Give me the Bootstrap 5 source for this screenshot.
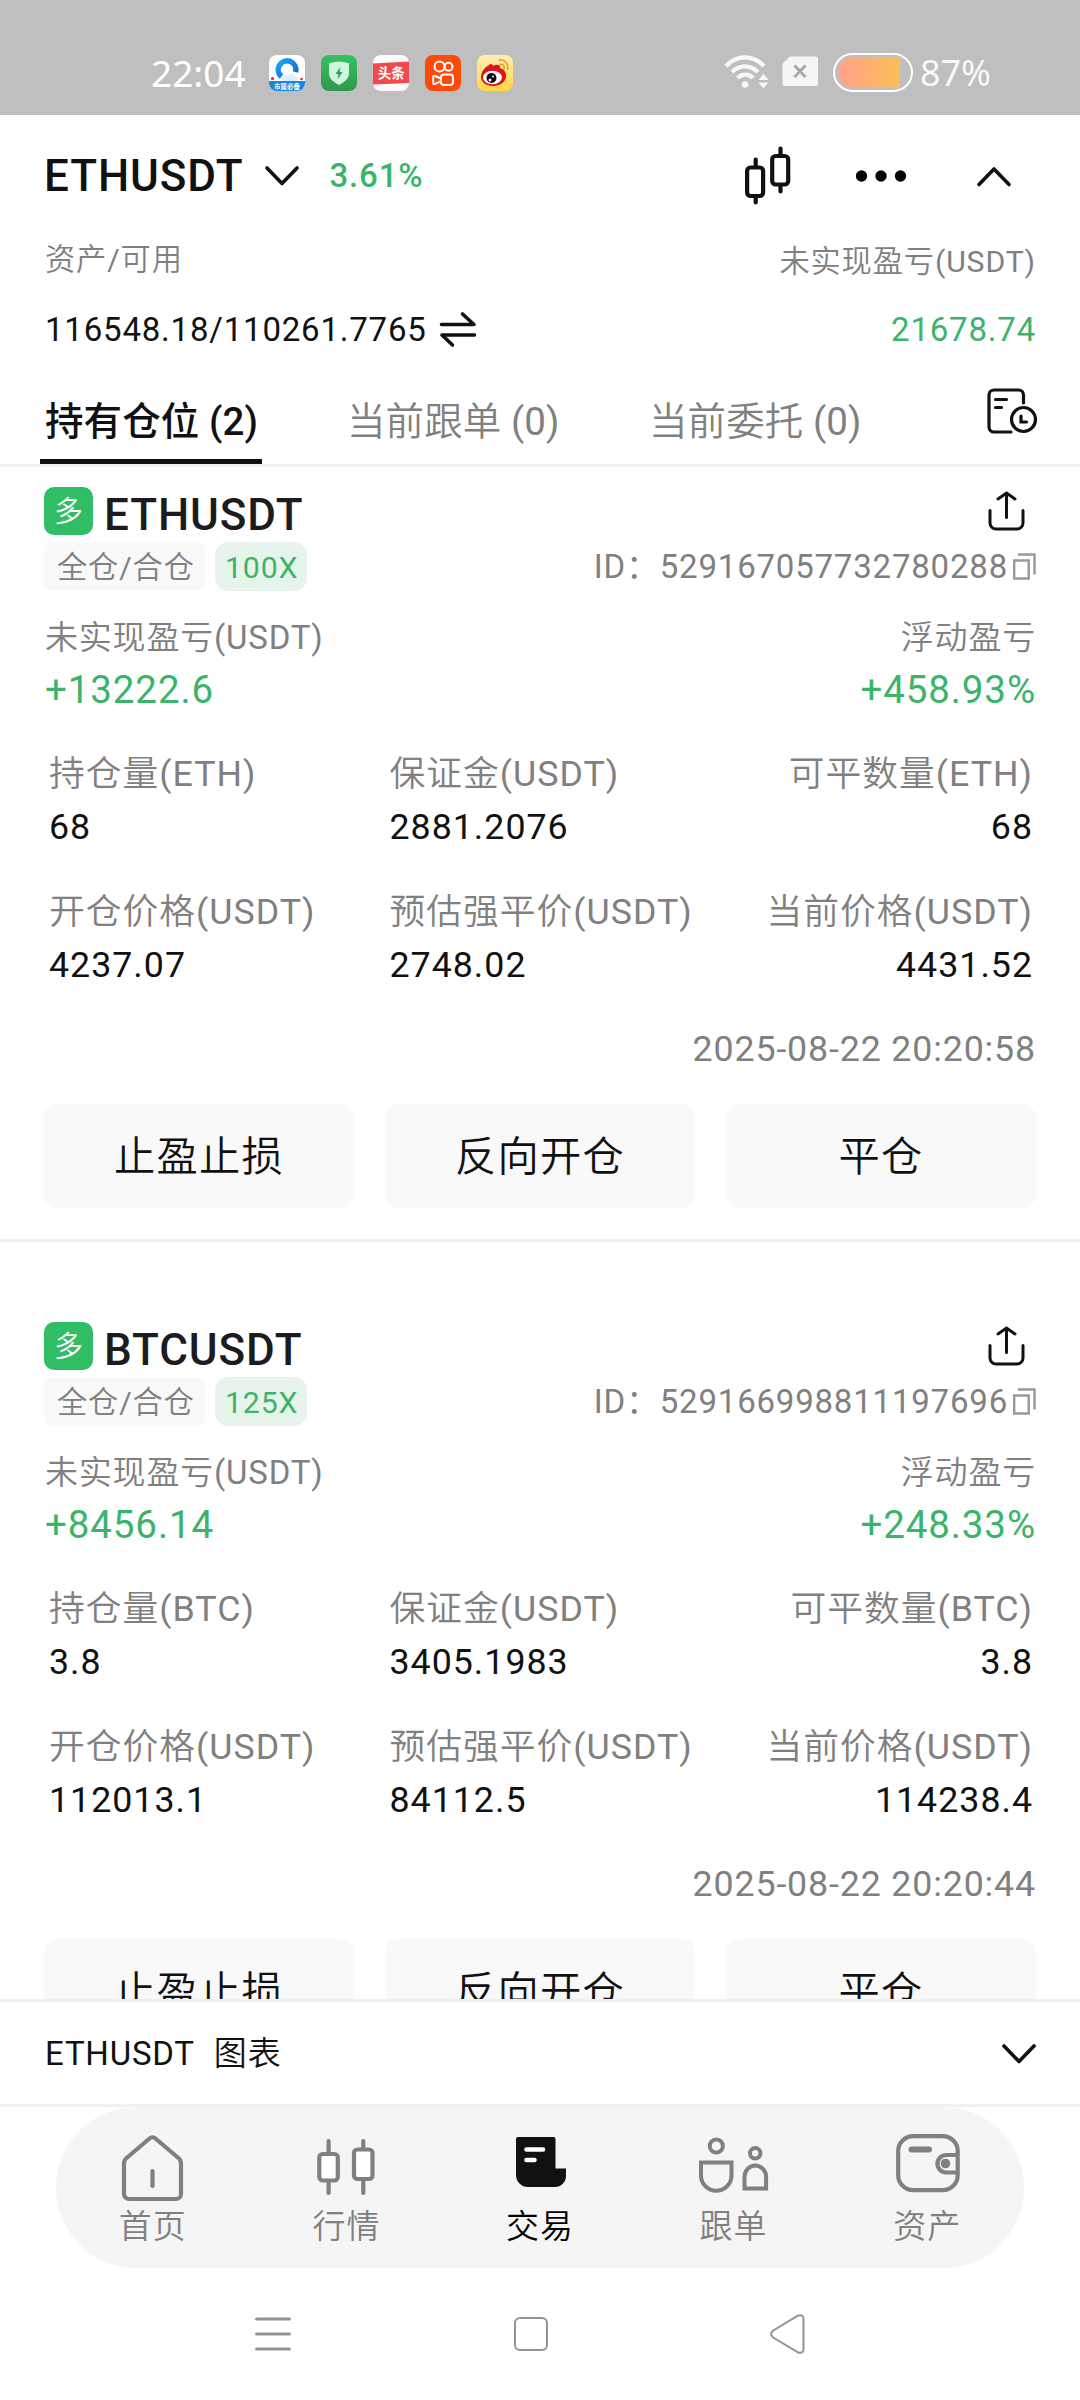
<!DOCTYPE html>
<html lang="zh-CN">
<head>
<meta charset="utf-8">
<meta name="viewport" content="width=device-width, initial-scale=1">
<title>ETHUSDT</title>
<link rel="stylesheet" href="https://cdn.jsdelivr.net/npm/bootstrap@5.3.0/dist/css/bootstrap.min.css">
<style>
  :root { --ink:#111112; --soft:#808080; --up:#3bb46a; --line:#f1f1f1; }
  html, body { height:2400px; overflow:hidden; }
  body { font-family:Roboto, "Noto Sans CJK SC DemiLight", "Noto Sans CJK SC", sans-serif; color:var(--ink); background:#fff; letter-spacing:.8px; font-size:33px; }
  svg { display:block; flex:none; overflow:visible; }
  .phone { width:1080px; height:2400px; }
  .soft { color:var(--soft); }
  .up { color:var(--up); }
  .fs11 { font-size:30.25px; letter-spacing:.85px; }
  .fs13 { font-size:35.75px; letter-spacing:1px; }
  .fs14 { font-size:38.5px; letter-spacing:.9px; }
  /* status bar */
  .statusbar { height:115px; background:#bfbfbf; color:#fff; padding:53px 89px 0 151px; font-family:"Noto Sans", sans-serif; font-size:37px; letter-spacing:0; line-height:40px; }
  .clock { width:118px; }
  .apps { gap:16px; }
  .battery { width:80px; height:39px; border:2.5px solid #fff; border-radius:20px; padding:2px 11px 2px 3px; }
  .battery-fill { border-radius:16px 0 0 16px; background:linear-gradient(90deg,#ffa18c,#fdbf55); }
  .pct { color:#f8f8f8; font-size:36px; padding-left:7px; }
  /* header */
  .topbar { height:121px; padding:0 69px 0 44px; }
  .pair { font-size:44px; font-weight:500; letter-spacing:.9px; line-height:48px; }
  .assets { height:141px; padding:0 44px 0 45px; }
  /* tabs */
  .tabs { height:90px; border-bottom:3px solid var(--line); padding:0 42px 0 40px; }
  .tabs .tab { height:87px; padding:7px 4px 0 5px; width:222px; margin-right:80px; border-bottom:5px solid transparent; font-size:38.5px; letter-spacing:.1px; line-height:76px; color:var(--soft); white-space:nowrap; }
  .tabs .tab.active { font-family:Roboto, "Noto Sans CJK SC", sans-serif; font-weight:500; color:var(--ink); border-color:var(--ink); }
  /* positions */
  .positions { height:1532px; overflow:hidden; }
  .position { padding:20px 44px 31px; border-bottom:3px solid var(--line); margin-bottom:60px; height:775px; }
  .side { width:49px; height:48px; border-radius:10px; background:#30bd66; color:#fff; font-size:29px; line-height:50px; letter-spacing:0; text-align:center; }
  .symbol { margin:8px 0 0 11px; color:#1c1c1e; }
  .tagrow { margin-top:7px; height:49px; }
  .tag { height:49px; line-height:51px; border-radius:9px; background:#f9f9f9; padding:0 13px; width:161px; white-space:nowrap; }
  .tag.lev { background:#e7f4ec; border-radius:13px; padding:0 10px; width:92px; margin-left:10px; }
  .pnl { margin-top:21px; padding-left:1px; line-height:52px; }
  .facts { margin:30px 3px 0 5px; line-height:54px; display:grid; grid-template-columns:340.5px 1fr auto; }
  .facts .soft { padding-top:1px; margin-bottom:-1px; }
  .time { margin-top:32px; line-height:50px; letter-spacing:.85px; }
  .acts { margin-top:30px; gap:31px; }
  .acts .btn { flex:1 1 0; height:104px; padding:0; border:0; border-radius:14px; background:#f9f9f9; font-size:41.25px; letter-spacing:1.2px; line-height:106px; color:var(--ink); }
  /* bottom */
  .chartbar { height:108px; border-top:3px solid var(--line); border-bottom:3px solid var(--line); padding:1px 44px 0 45px; }
  .dock { height:161px; margin:0 56px; border-radius:81px; background:#f5f5f5; }
  .dock .item { flex:1 1 0; color:var(--soft); }
  .dock .item.current { color:#000; }
  .dock .pic { height:98px; }
  .dock .item span { line-height:44px; letter-spacing:1px; }
  .sysnav { height:132px; }
</style>
</head>
<body>
<div class="phone d-flex flex-column">

  <div class="statusbar d-flex align-items-start">
    <div class="clock">22:04</div>
    <div class="apps d-flex" style="margin-top:2px">
      <svg width="36" height="36" viewBox="0 0 36 36"><defs><clipPath id="r"><rect width="36" height="36" rx="8"/></clipPath><linearGradient id="q" x1="0" y1="0" x2="1" y2="1"><stop offset="0" stop-color="#19a7f5"/><stop offset="1" stop-color="#1460dc"/></linearGradient><linearGradient id="g" x1="0" y1="0" x2="0" y2="1"><stop offset="0" stop-color="#35c163"/><stop offset="1" stop-color="#32974d"/></linearGradient><linearGradient id="y" x1="0" y1="0" x2="0" y2="1"><stop offset="0" stop-color="#fdeeb5"/><stop offset="1" stop-color="#ffd83f"/></linearGradient></defs><g clip-path="url(#r)"><rect width="36" height="36" fill="#fff"/><path d="M12.500 21.500A8.800 8.800 0 1 1 26.500 17" fill="none" stroke="url(#q)" stroke-width="5.500"/><path d="M13 24c0-4 4-5 6-3 1-3 5-3 6 0 4-1 5 5 2 6H14z" fill="#dfeefb"/><rect y="26" width="36" height="10" fill="#1786e2"/><circle cx="3.500" cy="23.500" r="1.600" fill="#c8323c"/><circle cx="32.500" cy="24" r="1.300" fill="#c8323c"/><text x="18" y="34" font-size="6.500" font-weight="700" text-anchor="middle" fill="#fff" font-family="Noto Sans CJK SC">市屋必备</text></g></svg>
      <svg width="36" height="36" viewBox="0 0 36 36"><rect width="36" height="36" rx="8" fill="url(#g)"/><path d="M18 6.500c3 0 6 .8 9 1.500.8.300 1 .8 1 1.500v9c0 5-5 9-10 11.500-5-2.500-10-6.500-10-11.500v-9c0-.7.200-1.200 1-1.500 3-.7 6-1.500 9-1.500z" fill="#cff7dc"/><path d="M19.500 12l-5 7h3l-1 5.500 5-7.500h-3z" fill="#2b9a55"/></svg>
      <svg width="36" height="36" viewBox="0 0 36 36"><rect width="36" height="36" rx="8" fill="#fdfafa"/><path d="M0 8.500L36 6.500V28L0 29.500z" fill="#f24a4c"/><text x="18.300" y="23" font-size="13.500" font-weight="700" text-anchor="middle" fill="#fff" font-family="Noto Sans CJK SC">头条</text></svg>
      <svg width="36" height="36" viewBox="0 0 36 36"><rect width="36" height="36" rx="8" fill="#fd4a08"/><g fill="none" stroke="#fff" stroke-width="2"><circle cx="14.500" cy="11.500" r="5"/><circle cx="23.500" cy="11.800" r="4"/><rect x="16" y="19.500" width="12" height="10.500" rx="3"/><path d="M16 23.500l-6-2.500c-1-.4-1.800 0-1.800 1v6c0 1 .8 1.300 1.800.8l6-2.600" stroke-linejoin="round"/></g></svg>
      <svg width="36" height="36" viewBox="0 0 36 36"><rect width="36" height="36" rx="8" fill="url(#y)"/><path d="M12 10c1-2 4-1 4 1 3-2 8-2 7 2 4 1 6 4 6 8 0 6-6 10-13 10S4 27 4 22c0-5 4-10 8-12z" fill="#e0121b"/><ellipse cx="15.500" cy="22.500" rx="9.500" ry="6.700" fill="#fff"/><circle cx="14.500" cy="23" r="5" fill="#0c0c0c"/><circle cx="13" cy="25" r="1.500" fill="#fff"/><circle cx="16" cy="21.500" r="1" fill="#fff"/><path d="M22.500 5c5-1 9.500 4 8 9.500M23 9.500c3-.6 5 1.500 4.200 4.500" fill="none" stroke="#eda437" stroke-width="1.800" stroke-linecap="round"/></svg>
    </div>
    <div class="ms-auto d-flex align-items-start">
      <svg width="46" height="36" viewBox="0 0 46 36"><g fill="none" stroke="#f8f8f8" stroke-width="4.300"><path d="M2 13C13 1.500 29 1.500 40 13"/><path d="M8 19C16 11.500 26 11.500 34 19"/><path d="M13.500 25C18 20.500 25 20.500 29 25"/></g><circle cx="21" cy="31.500" r="3.300" fill="#f8f8f8"/><path d="M34.500 27l5-6 5 6zM34.500 29.500l5 6 5-6z" fill="#f8f8f8"/></svg>
      <svg style="margin:3px 12px 0 11px" width="40" height="31" viewBox="0 0 40 31"><path d="M9 0.500H34.500a2.500 2.500 0 0 1 2.500 2.500V27.500a2.500 2.500 0 0 1-2.500 2.500H4a2.500 2.500 0 0 1-2.500-2.500V7.500z" fill="#f5f5f5"/><path d="M13.500 9.500l11 11.500M24.500 9.500l-11 11.500" stroke="#a9a9a9" stroke-width="3"/></svg>
      <div class="battery d-flex"><div class="battery-fill flex-fill"></div></div>
      <div class="pct">87%</div>
    </div>
  </div>

  <div class="topbar d-flex align-items-center">
    <div class="pair">ETHUSDT</div>
    <svg style="margin-left:21px" width="34" height="20" viewBox="0 0 34 20"><path d="M2 2l15 15.500L32 2" fill="none" stroke="#111" stroke-width="3.600" stroke-linecap="round" stroke-linejoin="round"/></svg>
    <div class="up fw-medium" style="margin-left:31px">3.61%</div>
    <svg class="ms-auto" width="46" height="60" viewBox="0 0 46 60"><g fill="none" stroke="#111" stroke-width="4.200" stroke-linecap="round"><rect x="2.100" y="21.500" width="16" height="28.500" rx="3.500"/><path d="M10.700 13.500v7M10.700 50.500v6"/><rect x="27.200" y="10" width="16" height="28.500" rx="3.500"/><path d="M35.500 2.500v6M35.500 39.500v6"/></g></svg>
    <svg style="margin-left:64px" width="52" height="12" viewBox="0 0 52 12"><circle cx="6.500" cy="6" r="5.700"/><circle cx="26" cy="6" r="5.700"/><circle cx="45.500" cy="6" r="5.700"/></svg>
    <svg style="margin-left:70px" width="34" height="20" viewBox="0 0 34 20"><path d="M2 18.500L17 3 32 18.500" fill="none" stroke="#111" stroke-width="3.600" stroke-linecap="round" stroke-linejoin="round"/></svg>
  </div>

  <div class="assets d-flex justify-content-between">
    <div>
      <div class="soft fs11" style="line-height:47px">资产/可用</div>
      <div class="d-flex align-items-center" style="line-height:93px">116548.18/110261.7765
        <svg style="margin-left:13px" width="36" height="35" viewBox="0 0 36 35"><path d="M1.500 12.500H34L22.500 2M34.500 23H2L12.500 33" fill="none" stroke="#111" stroke-width="3.600" stroke-linecap="round" stroke-linejoin="round"/></svg>
      </div>
    </div>
    <div class="text-end">
      <div class="soft fs11" style="line-height:51px">未实现盈亏(USDT)</div>
      <div class="up" style="line-height:85px">21678.74</div>
    </div>
  </div>

  <div class="tabs d-flex">
    <div class="tab active">持有仓位 (2)</div>
    <div class="tab">当前跟单 (0)</div>
    <div class="tab">当前委托 (0)</div>
    <svg class="ms-auto" style="margin-top:11px" width="51" height="46" viewBox="0 0 51 46"><g fill="none" stroke="#111" stroke-width="3.200" stroke-linecap="round"><path d="M36.500 15V7a5 5 0 0 0-5-5H7a5 5 0 0 0-5 5v32a5 5 0 0 0 5 5h17"/><path d="M8.500 11.500h11M8.500 19.500h6"/><circle cx="36.500" cy="31.500" r="12"/><path d="M34 28v6h5.500"/></g></svg>
  </div>

  <div class="positions">
    <div class="position">
      <div class="d-flex align-items-center" style="height:48px">
        <div class="side">多</div>
        <div class="pair symbol">ETHUSDT</div>
        <svg class="ms-auto" style="margin-right:11px" width="37" height="40" viewBox="0 0 37 40"><path d="M2 19.500V32a6 6 0 0 0 6 6h21a6 6 0 0 0 6-6V19.500M18.500 26.500V2.500M10 8l8.500-6L27 8" fill="none" stroke="#111" stroke-width="3" stroke-linecap="round"/></svg>
      </div>
      <div class="tagrow d-flex align-items-center soft">
        <div class="tag fs11">全仓/合仓</div>
        <div class="tag lev fs11 up">100X</div>
        <div class="ms-auto">ID：529167057732780288</div>
        <svg style="margin-left:5px" width="23" height="27" viewBox="0 0 23 27"><path d="M1.200 7.500h14.500v18H1.200zM5 1.500h16.500v20" fill="none" stroke="#999" stroke-width="2.400"/></svg>
      </div>
      <div class="pnl d-flex justify-content-between">
        <div><div class="soft">未实现盈亏(USDT)</div><div class="up fs14">+13222.6</div></div>
        <div class="text-end"><div class="soft">浮动盈亏</div><div class="up fs14">+458.93%</div></div>
      </div>
      <div class="facts fs13">
        <div><div class="soft">持仓量(ETH)</div><div>68</div></div>
        <div><div class="soft">保证金(USDT)</div><div>2881.2076</div></div>
        <div class="text-end"><div class="soft">可平数量(ETH)</div><div>68</div></div>
      </div>
      <div class="facts fs13">
        <div><div class="soft">开仓价格(USDT)</div><div>4237.07</div></div>
        <div><div class="soft">预估强平价(USDT)</div><div>2748.02</div></div>
        <div class="text-end"><div class="soft">当前价格(USDT)</div><div>4431.52</div></div>
      </div>
      <div class="fs13"><div class="time soft text-end">2025-08-22 20:20:58</div></div>
      <div class="acts d-flex">
        <button class="btn">止盈止损</button>
        <button class="btn">反向开仓</button>
        <button class="btn">平仓</button>
      </div>
    </div>

    <div class="position">
      <div class="d-flex align-items-center" style="height:48px">
        <div class="side">多</div>
        <div class="pair symbol">BTCUSDT</div>
        <svg class="ms-auto" style="margin-right:11px" width="37" height="40" viewBox="0 0 37 40"><path d="M2 19.500V32a6 6 0 0 0 6 6h21a6 6 0 0 0 6-6V19.500M18.500 26.500V2.500M10 8l8.500-6L27 8" fill="none" stroke="#111" stroke-width="3" stroke-linecap="round"/></svg>
      </div>
      <div class="tagrow d-flex align-items-center soft">
        <div class="tag fs11">全仓/合仓</div>
        <div class="tag lev fs11 up">125X</div>
        <div class="ms-auto">ID：529166998811197696</div>
        <svg style="margin-left:5px" width="23" height="27" viewBox="0 0 23 27"><path d="M1.200 7.500h14.500v18H1.200zM5 1.500h16.500v20" fill="none" stroke="#999" stroke-width="2.400"/></svg>
      </div>
      <div class="pnl d-flex justify-content-between">
        <div><div class="soft">未实现盈亏(USDT)</div><div class="up fs14">+8456.14</div></div>
        <div class="text-end"><div class="soft">浮动盈亏</div><div class="up fs14">+248.33%</div></div>
      </div>
      <div class="facts fs13">
        <div><div class="soft">持仓量(BTC)</div><div>3.8</div></div>
        <div><div class="soft">保证金(USDT)</div><div>3405.1983</div></div>
        <div class="text-end"><div class="soft">可平数量(BTC)</div><div>3.8</div></div>
      </div>
      <div class="facts fs13">
        <div><div class="soft">开仓价格(USDT)</div><div>112013.1</div></div>
        <div><div class="soft">预估强平价(USDT)</div><div>84112.5</div></div>
        <div class="text-end"><div class="soft">当前价格(USDT)</div><div>114238.4</div></div>
      </div>
      <div class="fs13"><div class="time soft text-end">2025-08-22 20:20:44</div></div>
      <div class="acts d-flex">
        <button class="btn">止盈止损</button>
        <button class="btn">反向开仓</button>
        <button class="btn">平仓</button>
      </div>
    </div>
  </div>

  <div class="chartbar d-flex align-items-center justify-content-between">
    <div class="d-flex"><span>ETHUSDT</span><span style="margin-left:19px">图表</span></div>
    <svg width="34" height="20" viewBox="0 0 34 20"><path d="M2 2l15 15.500L32 2" fill="none" stroke="#111" stroke-width="3.600" stroke-linecap="round" stroke-linejoin="round"/></svg>
  </div>

  <div class="dock d-flex">
    <div class="item d-flex flex-column align-items-center"><div class="pic" style="padding-top:28px"><svg width="61" height="66" viewBox="0 0 61 66"><path d="M2 27.500a6 6 0 0 1 2-4L27.500 3.500a4.500 4.500 0 0 1 6 0L57 23.500a6 6 0 0 1 2 4V59a5 5 0 0 1-5 5H7a5 5 0 0 1-5-5zM30.500 36v15" fill="none" stroke="#808080" stroke-width="4.200" stroke-linecap="round"/></svg></div><span>首页</span></div>
    <div class="item d-flex flex-column align-items-center"><div class="pic" style="padding-top:32px"><svg width="58" height="56" viewBox="0 0 58 56"><g fill="#fff" stroke="#808080" stroke-width="4.200" stroke-linecap="round"><rect x="2.300" y="15" width="18.500" height="26.500" rx="3.500"/><path d="M11.600 2v12M11.600 42.500V54"/><rect x="37" y="10.500" width="18.500" height="29.500" rx="3.500"/><path d="M46.300 2v8M46.300 41v13"/></g></svg></div><span>行情</span></div>
    <div class="item current d-flex flex-column align-items-center"><div class="pic" style="padding:30px 0 0 3px"><svg width="50" height="50" viewBox="0 0 50 50"><path d="M2 0H37.500a2 2 0 0 1 2 2V31.500H50V39a11 11 0 0 1-11 11H12A12 12 0 0 1 0 38V2a2 2 0 0 1 2-2z" fill="#111"/><path d="M10.500 12.500h16.500M10.500 23h8" stroke="#fff" stroke-width="4.600" stroke-linecap="round"/></svg></div><span>交易</span></div>
    <div class="item d-flex flex-column align-items-center"><div class="pic" style="padding-top:30px"><svg width="70" height="56" viewBox="0 0 70 56"><g fill="none" stroke="#808080" stroke-width="4"><circle cx="17.300" cy="9" r="6.600"/><path d="M2 25.500H32.500V38.500a15.250 15.250 0 0 1-30.500 0z"/><circle cx="56.200" cy="16.300" r="5.200"/><path d="M45.500 51.500V40a10.800 11.500 0 0 1 21.600 0V51.500z"/></g></svg></div><span>跟单</span></div>
    <div class="item d-flex flex-column align-items-center"><div class="pic" style="padding:27px 0 0 2px"><svg width="64" height="58" viewBox="0 0 64 58"><g fill="none" stroke="#808080" stroke-width="4.200" stroke-linecap="round"><rect x="2.200" y="2.200" width="59.500" height="54" rx="15"/><path d="M61 21H50.500a9 8.700 0 0 0 0 17.500H61"/><path d="M15.500 15.500H33" stroke-width="6"/></g><circle cx="49.500" cy="29.500" r="4.800" fill="#808080"/></svg></div><span>资产</span></div>
  </div>

  <div class="sysnav d-flex align-items-center">
    <svg style="margin-left:255px" width="36" height="34" viewBox="0 0 36 34"><path d="M1.500 2h33M1.500 17h33M1.500 32h33" stroke="#939393" stroke-width="3" stroke-linecap="round"/></svg>
    <svg style="margin-left:223px" width="34" height="34" viewBox="0 0 34 34"><rect x="1" y="1" width="32" height="32" rx="5" fill="none" stroke="#939393" stroke-width="2"/></svg>
    <svg style="margin-left:222px" width="35" height="40" viewBox="0 0 35 40"><path d="M27.500 1.800L3.200 16.500q-4.200 3.500 0 7L27.500 38.200q6 2 6-3.200V5q0-5.200-6-3.200z" fill="none" stroke="#939393" stroke-width="2"/></svg>
  </div>
</div>
<script src="https://cdn.jsdelivr.net/npm/bootstrap@5.3.0/dist/js/bootstrap.bundle.min.js"></script>
</body>
</html>
